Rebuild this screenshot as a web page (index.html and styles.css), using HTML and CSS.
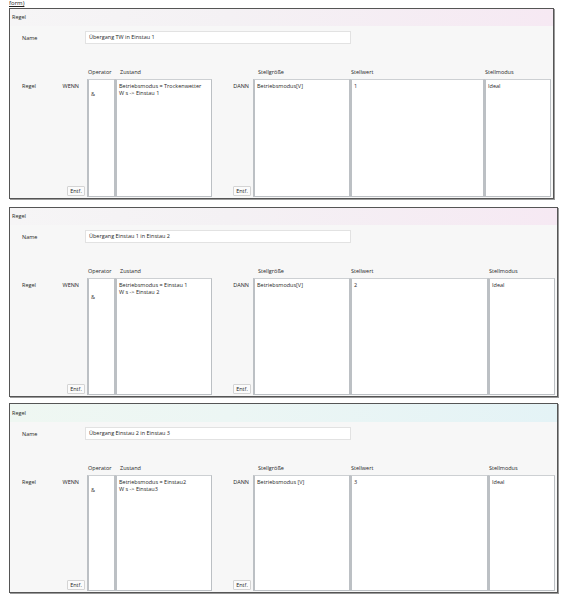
FILE: index.html
```html
<!DOCTYPE html>
<html lang="de">
<head>
    <meta charset="UTF-8">
    <title>Regeln</title>
    <link rel="stylesheet" href="styles.css">
</head>
<body>
    <div class="caption">form)</div>

    <div class="panel">
        <div class="panel-head">Regel</div>
        <div class="panel-body">
            <div class="name-row">
                <label>Name</label>
                <div class="name-input">Übergang TW in Einstau 1</div>
            </div>
            <div class="rule">
                <div></div>
                <div class="col-title">Operator</div>
                <div class="col-title pad">Zustand</div>
                <div></div>
                <div class="col-title pad">Stellgröße</div>
                <div class="col-title">Stellwert</div>
                <div class="col-title">Stellmodus</div>

                <div class="side">
                    <div class="side-labels"><span>Regel</span><span>WENN</span></div>
                    <button class="del">Entf.</button>
                </div>
                <div class="box op">&amp;</div>
                <div class="box">Betriebsmodus = Trockenwetter<br>W s -&gt; Einstau 1</div>
                <div class="side then">
                    <div class="side-labels"><span>DANN</span></div>
                    <button class="del">Entf.</button>
                </div>
                <div class="box">Betriebsmodus[V]</div>
                <div class="box">1</div>
                <div class="box">Ideal</div>
            </div>
        </div>
    </div>

    <div class="panel panel-wide">
        <div class="panel-head">Regel</div>
        <div class="panel-body">
            <div class="name-row">
                <label>Name</label>
                <div class="name-input">Übergang Einstau 1 in Einstau 2</div>
            </div>
            <div class="rule">
                <div></div>
                <div class="col-title">Operator</div>
                <div class="col-title pad">Zustand</div>
                <div></div>
                <div class="col-title pad">Stellgröße</div>
                <div class="col-title">Stellwert</div>
                <div class="col-title">Stellmodus</div>

                <div class="side">
                    <div class="side-labels"><span>Regel</span><span>WENN</span></div>
                    <button class="del">Entf.</button>
                </div>
                <div class="box op op-low">&amp;</div>
                <div class="box">Betriebsmodus = Einstau 1<br>W s -&gt; Einstau 2</div>
                <div class="side then">
                    <div class="side-labels"><span>DANN</span></div>
                    <button class="del">Entf.</button>
                </div>
                <div class="box">Betriebsmodus[V]</div>
                <div class="box">2</div>
                <div class="box">Ideal</div>
            </div>
        </div>
    </div>

    <div class="panel panel-wide panel-teal">
        <div class="panel-head">Regel</div>
        <div class="panel-body">
            <div class="name-row">
                <label>Name</label>
                <div class="name-input">Übergang Einstau 2 in Einstau 3</div>
            </div>
            <div class="rule">
                <div></div>
                <div class="col-title">Operator</div>
                <div class="col-title pad">Zustand</div>
                <div></div>
                <div class="col-title pad">Stellgröße</div>
                <div class="col-title">Stellwert</div>
                <div class="col-title">Stellmodus</div>

                <div class="side">
                    <div class="side-labels"><span>Regel</span><span>WENN</span></div>
                    <button class="del">Entf.</button>
                </div>
                <div class="box op">&amp;</div>
                <div class="box">Betriebsmodus = Einstau2<br>W s -&gt; Einstau3</div>
                <div class="side then">
                    <div class="side-labels"><span>DANN</span></div>
                    <button class="del">Entf.</button>
                </div>
                <div class="box">Betriebsmodus [V]</div>
                <div class="box">3</div>
                <div class="box">Ideal</div>
            </div>
        </div>
    </div>
</body>
</html>
```

FILE: styles.css
```css
body {
    font-family: "Open Sans", "DejaVu Sans", sans-serif;
    font-size: 5.5px;
    font-variant-ligatures: none;
    color: #1f1f1f;
    margin: 0;
    padding: 0 0 0 9px;
    background-color: #fff;
}

.caption {
    font-size: 6px;
    line-height: 7px;
    height: 8px;
    color: #222;
    text-decoration: underline;
}

.panel {
    width: 543px;
    height: 189px;
    margin-bottom: 8px;
    background-color: #f7f7f7;
    border: 1px solid #555;
    box-shadow: 1px 1px 0 #9a9a9a;
    display: flex;
    flex-direction: column;
}

.panel-wide {
    width: 547px;
    height: 188px;
    margin-bottom: 6px;
}

.panel-head {
    height: 17px;
    line-height: 17px;
    padding-left: 2px;
    background: linear-gradient(to right, #f6f5f6, #f4f1f4 40%, #f6e9f3);
}

.panel-teal .panel-head {
    height: 18px;
    line-height: 18px;
    background: linear-gradient(to right, #eff7f2, #ecf6f4 40%, #e4f3f6);
}

.panel-body {
    flex: 1;
    display: flex;
    flex-direction: column;
    padding: 5px 2px 1px 0;
}

.name-row {
    display: flex;
    align-items: center;
    height: 13px;
}

.name-row label {
    width: 63px;
    padding-left: 12px;
}

.name-input {
    width: 261px;
    height: 11px;
    line-height: 11px;
    padding-left: 3px;
    background-color: #fff;
    border: 1px solid #e2e2e2;
}

.rule {
    flex: 1;
    margin-top: 22px;
    display: grid;
    grid-template-columns: 77px 28px 97px 41px 97px 1fr 67px;
    grid-template-rows: 12px 1fr;
    row-gap: 1px;
}

.col-title {
    line-height: 12px;
    padding-left: 1px;
}

.col-title.pad {
    padding-left: 5px;
}

.side {
    display: flex;
    flex-direction: column;
    justify-content: space-between;
    align-items: flex-end;
    padding: 3px 2px 1px 12px;
}

.side-labels {
    align-self: stretch;
    display: flex;
    justify-content: space-between;
    padding-right: 6px;
}

.then .side-labels {
    justify-content: flex-end;
    padding-right: 2px;
    margin-left: -12px;
}

.del {
    font: inherit;
    color: #1f1f1f;
    width: 18px;
    height: 10px;
    padding: 0;
    background-color: #fbfbfb;
    border: 1px solid #d4d4d4;
    border-radius: 1px;
}

.box {
    background-color: #fff;
    border: 1px solid #bcc0c4;
    border-left-width: 2px;
    border-top-color: #cdd0d3;
    padding: 3px 2px;
    line-height: 6.5px;
}

.box.op {
    padding-top: 11px;
}

.box.op.op-low {
    padding-top: 15px;
}
```
